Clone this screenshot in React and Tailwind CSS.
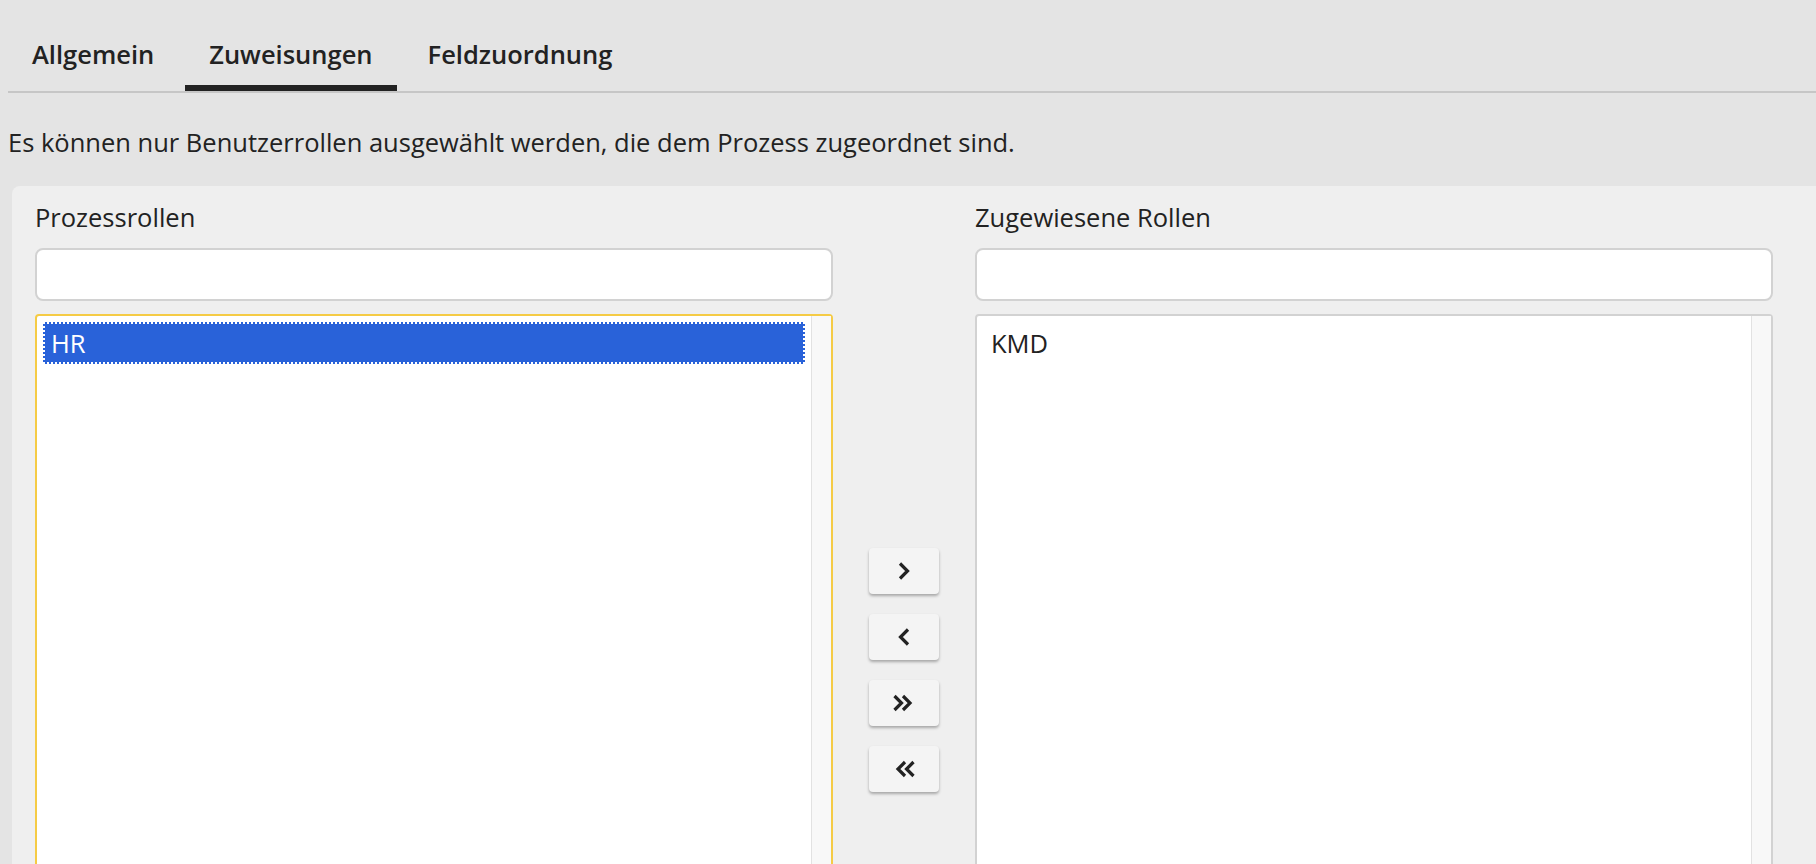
import React from "react";

function Chevron({ dir = "right", double = false }) {
  if (!double) {
    const pts = dir === "right" ? "3,2.5 10.5,10 3,17.5" : "11,2.5 3.5,10 11,17.5";
    return (
      <svg width="14" height="20" viewBox="0 0 14 20" fill="none">
        <polyline points={pts} stroke="#222" strokeWidth="3.2" />
      </svg>
    );
  }
  const a = dir === "right" ? "2.5,2 9.5,9 2.5,16" : "21.5,2 14.5,9 21.5,16";
  const b = dir === "right" ? "11,2 18,9 11,16" : "13,2 6,9 13,16";
  return (
    <svg width="24" height="18" viewBox="0 0 24 18" fill="none">
      <polyline points={a} stroke="#222" strokeWidth="3.2" />
      <polyline points={b} stroke="#222" strokeWidth="3.2" />
    </svg>
  );
}

function MoveButton({ children }) {
  return (
    <button className="w-[70px] h-[46px] rounded-[4px] bg-[#f4f4f4] shadow-[0_2px_3px_rgba(0,0,0,0.3)] flex items-center justify-center">
      {children}
    </button>
  );
}

function Column({ label, items, selected, focused }) {
  return (
    <div className="w-[798px] flex flex-col">
      <div className="text-[25.5px] leading-[34px]">{label}</div>
      <input
        className="mt-[14px] h-[53px] w-full rounded-[8px] border-2 border-[#d2d2d2] bg-white outline-none"
        type="text"
      />
      <div
        className={
          "mt-[13px] h-[712px] flex bg-white border-2 rounded-t-[4px] " +
          (focused ? "border-[#f5cb45]" : "border-[#d2d2d2]")
        }
      >
        <div className="flex-1 pt-[6px] pl-[6px] pr-[6px]">
          {items.map((it) => (
            <div
              key={it}
              className={
                "h-[42px] flex items-center pl-[6px] text-[25.5px] border-2 " +
                (selected === it
                  ? "bg-[#2962d9] text-white border-dotted border-white"
                  : "border-transparent text-[#222]")
              }
            >
              {it}
            </div>
          ))}
        </div>
        <div className="w-[20px] bg-[#f8f8f8] border-l border-[#e2e2e2]"></div>
      </div>
    </div>
  );
}

export default function App() {
  return (
    <div className="w-full h-[864px] overflow-hidden bg-[#e4e4e4] text-[#222] font-['Open_Sans',sans-serif]">
      <div className="ml-[8px]">
        <div className="flex gap-[7px] pt-[25px] border-b-2 border-[#c6c6c6]">
          <div className="px-6 pt-[12px] pb-[14px] border-b-[6px] border-transparent text-[25.5px] leading-[34px] font-semibold">
            Allgemein
          </div>
          <div className="px-6 pt-[12px] pb-[14px] border-b-[6px] border-[#222] text-[25.5px] leading-[34px] font-semibold">
            Zuweisungen
          </div>
          <div className="px-6 pt-[12px] pb-[14px] border-b-[6px] border-transparent text-[25.5px] leading-[34px] font-semibold">
            Feldzuordnung
          </div>
        </div>
        <p className="mt-[32px] text-[25.5px] leading-[34px]">
          Es können nur Benutzerrollen ausgewählt werden, die dem Prozess zugeordnet sind.
        </p>
        <div className="mt-[27px] ml-[4px] bg-[#efefef] rounded-tl-[8px] pt-[14px] pl-[23px] flex">
          <Column label="Prozessrollen" items={["HR"]} selected="HR" focused />
          <div className="w-[142px] mt-[114px] h-[712px] flex flex-col items-center justify-center gap-[20px]">
            <MoveButton>
              <Chevron dir="right" />
            </MoveButton>
            <MoveButton>
              <Chevron dir="left" />
            </MoveButton>
            <MoveButton>
              <Chevron dir="right" double />
            </MoveButton>
            <MoveButton>
              <Chevron dir="left" double />
            </MoveButton>
          </div>
          <Column label="Zugewiesene Rollen" items={["KMD"]} />
        </div>
      </div>
    </div>
  );
}
